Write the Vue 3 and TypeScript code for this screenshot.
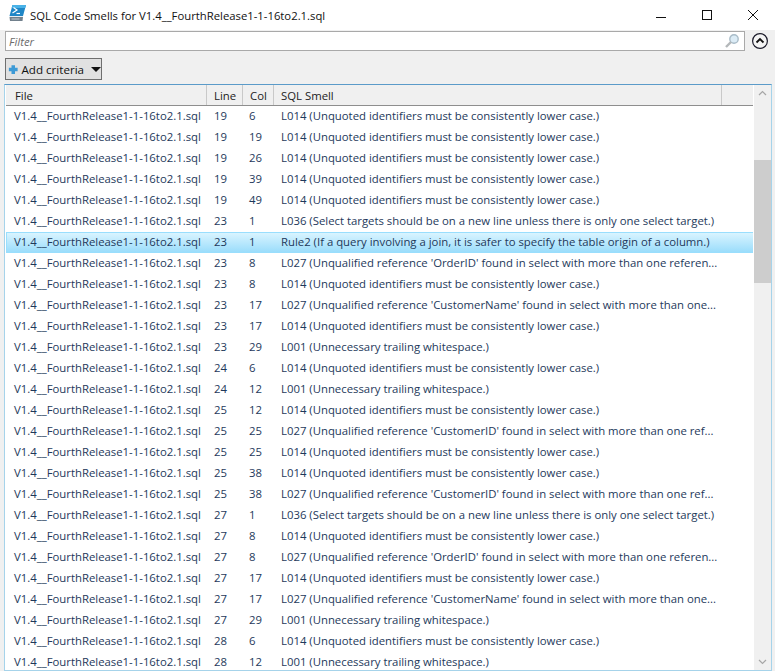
<template>
  <div class="window">
    <div class="titlebar">
      <svg class="app-icon" width="18" height="18" viewBox="0 0 18 18">
        <path d="M3.5 0H17l-3 11H0.5z" fill="#1f86c6" />
        <path d="M3.5 0H17l-.8 3H2.7z" fill="#49b2e8" />
        <path d="M4.5 2.5l3.5 2.5-4.5 3" fill="none" stroke="#fff" stroke-width="1.2" />
        <path d="M7.5 8.5h3.5" stroke="#fff" stroke-width="1.2" />
        <path d="M0.5 11H14v1H0.5z" fill="#e8eef2" />
        <path d="M0.5 12H14l-.5 4H1z" fill="#71808c" />
        <path d="M2.5 14h8" stroke="#c4ccd2" />
      </svg>
      <span class="title">SQL Code Smells for V1.4__FourthRelease1-1-16to2.1.sql</span>
      <div class="win-buttons">
        <svg width="12" height="12" viewBox="0 0 12 12"><path d="M1 8.5h10" stroke="#111" /></svg>
        <svg width="12" height="12" viewBox="0 0 12 12"><rect x="1.5" y="1.5" width="9" height="9" fill="none" stroke="#111" /></svg>
        <svg width="12" height="12" viewBox="0 0 12 12"><path d="M1 1l10 10M11 1L1 11" stroke="#111" /></svg>
      </div>
    </div>

    <div class="filter-bar">
      <div class="filter-box">
        <span class="filter-hint">Filter</span>
        <svg width="16" height="16" viewBox="0 0 16 16">
          <circle cx="10" cy="6" r="4.2" fill="#dcecf6" stroke="#a9bcc8" stroke-width="1.4" />
          <path d="M7 9l-5 5" stroke="#b4b8ba" stroke-width="2.4" />
        </svg>
      </div>
      <svg class="collapse" width="18" height="18" viewBox="0 0 18 18">
        <circle cx="9" cy="9" r="7.4" fill="#f4f4f4" stroke="#1b1b2a" stroke-width="1.2" />
        <path d="M5.5 10.5L9 7l3.5 3.5" fill="none" stroke="#111" stroke-width="1.8" />
      </svg>
    </div>

    <div class="toolbar">
      <button class="add-btn">
        <svg width="11" height="11" viewBox="0 0 12 12">
          <path d="M4 1h4v3h3v4H8v3H4V8H1V4h3z" fill="#3d9ad6" />
        </svg>
        <span class="add-label">Add criteria</span>
        <i class="caret"></i>
      </button>
    </div>

    <div class="list">
      <div class="list-main">
        <div class="row head">
          <div class="cell c-file">File</div>
          <div class="cell c-line">Line</div>
          <div class="cell c-col">Col</div>
          <div class="cell c-smell">SQL Smell</div>
          <div class="cell c-rest"></div>
        </div>
        <div
          v-for="(r, idx) in rows"
          :key="idx"
          class="row item"
          :class="{ selected: r.smell.startsWith('Rule2') }"
        >
          <div class="cell c-file">{{ fileName }}</div>
          <div class="cell c-line">{{ r.line }}</div>
          <div class="cell c-col">{{ r.col }}</div>
          <div class="cell c-smell">{{ r.smell }}</div>
        </div>
      </div>
      <div class="scrollbar">
        <svg class="arrow" width="17" height="17" viewBox="0 0 17 17"><path d="M5 10l3.5-3.5L12 10" fill="none" stroke="#a6a6a6" stroke-width="1.2" /></svg>
        <div class="thumb"></div>
        <div class="track-fill"></div>
        <svg class="arrow" width="17" height="17" viewBox="0 0 17 17"><path d="M5 7l3.5 3.5L12 7" fill="none" stroke="#a6a6a6" stroke-width="1.2" /></svg>
      </div>
    </div>
  </div>
</template>

<script setup lang="ts">
type Row = { line: number; col: number; smell: string }

const fileName = 'V1.4__FourthRelease1-1-16to2.1.sql'

const L014 = 'L014 (Unquoted identifiers must be consistently lower case.)'
const L001 = 'L001 (Unnecessary trailing whitespace.)'
const L036 = 'L036 (Select targets should be on a new line unless there is only one select target.)'
const RULE2 = 'Rule2 (If a query involving a join, it is safer to specify the table origin of a column.)'
const ORDER = "L027 (Unqualified reference 'OrderID' found in select with more than one referen..."
const CUSTOMER = "L027 (Unqualified reference 'CustomerName' found in select with more than one..."
const CUST_ID = "L027 (Unqualified reference 'CustomerID' found in select with more than one ref..."

const rows: Row[] = [
  { line: 19, col: 6, smell: L014 },
  { line: 19, col: 19, smell: L014 },
  { line: 19, col: 26, smell: L014 },
  { line: 19, col: 39, smell: L014 },
  { line: 19, col: 49, smell: L014 },
  { line: 23, col: 1, smell: L036 },
  { line: 23, col: 1, smell: RULE2 },
  { line: 23, col: 8, smell: ORDER },
  { line: 23, col: 8, smell: L014 },
  { line: 23, col: 17, smell: CUSTOMER },
  { line: 23, col: 17, smell: L014 },
  { line: 23, col: 29, smell: L001 },
  { line: 24, col: 6, smell: L014 },
  { line: 24, col: 12, smell: L001 },
  { line: 25, col: 12, smell: L014 },
  { line: 25, col: 25, smell: CUST_ID },
  { line: 25, col: 25, smell: L014 },
  { line: 25, col: 38, smell: L014 },
  { line: 25, col: 38, smell: CUST_ID },
  { line: 27, col: 1, smell: L036 },
  { line: 27, col: 8, smell: L014 },
  { line: 27, col: 8, smell: ORDER },
  { line: 27, col: 17, smell: L014 },
  { line: 27, col: 17, smell: CUSTOMER },
  { line: 27, col: 29, smell: L001 },
  { line: 28, col: 6, smell: L014 },
  { line: 28, col: 12, smell: L001 }
]
</script>

<style>
html, body { margin: 0; background: #f0f0f0; }
</style>

<style scoped>
.window {
  width: 775px;
  height: 671px;
  overflow: hidden;
  background: #f0f0f0;
  font-family: "Open Sans", "Noto Sans", sans-serif;
  font-size: 11.35px;
  color: #1e395b;
  display: flex;
  flex-direction: column;
}

.titlebar {
  height: 30px;
  flex: none;
  background: #fff;
  display: flex;
  align-items: center;
  padding-left: 9px;
  gap: 3px;
}
.app-icon { margin-top: -2px; }
.title { font-size: 11.3px; color: #111; }
.win-buttons {
  margin-left: auto;
  display: flex;
  gap: 34px;
  padding-right: 16px;
}

.filter-bar {
  height: 20px;
  flex: none;
  margin-top: 1px;
  padding: 0 6px 0 5px;
  display: flex;
  align-items: center;
  gap: 6px;
}
.filter-box {
  flex: 1;
  height: 18px;
  background: #fff;
  border: 1px solid #a9a9a9;
  display: flex;
  align-items: center;
  justify-content: space-between;
  padding: 0 4px 0 3px;
}
.filter-hint { font-style: italic; color: #6d6d6d; }

.toolbar {
  height: 33px;
  flex: none;
  padding: 7px 0 0 5px;
  box-sizing: border-box;
}
.add-btn {
  width: 97px;
  height: 22px;
  padding: 0 0 0 2px;
  box-sizing: border-box;
  background: #e1e1e1;
  border: 1px solid #6f6f6f;
  display: flex;
  align-items: center;
  gap: 3px;
  font: inherit;
  font-size: 11.6px;
  color: #111;
  white-space: nowrap;
}
.add-label { flex: none; }
.caret {
  margin-left: 4px;
  flex: none;
  width: 0;
  height: 0;
  border-left: 5px solid transparent;
  border-right: 5px solid transparent;
  border-top: 5px solid #111;
}

.list {
  flex: 1;
  min-height: 0;
  margin: 0 3px 0 4px;
  border: 1px solid #a6d3ea;
  border-top-color: #5b9bc9;
  background: #fff;
  display: flex;
}
.list-main {
  flex: 1;
  min-width: 0;
  padding-left: 1px;
  overflow: hidden;
}

.row {
  display: grid;
  grid-template-columns: 201px 36px 31px 1fr;
  align-items: center;
  box-sizing: border-box;
  white-space: nowrap;
}
.head {
  grid-template-columns: 201px 36px 31px 448px 31px;
  height: 21px;
  width: 747px;
  background: #f0f0f0;
  border-bottom: 1px solid #8e8e8e;
  color: #222;
}
.head .cell {
  height: 20px;
  line-height: 22px;
  border-right: 1px solid #c9c9c9;
}
.head .c-rest { border-right: none; }
.head .c-file { padding-left: 9px; }
.head .c-line { padding-left: 7px; }
.head .c-col { padding-left: 7px; }
.head .c-smell { padding-left: 7px; }

.item {
  height: 21px;
  width: 748px;
}
.item .cell { padding-bottom: 2px; }
.item .c-file { padding-left: 8px; }
.item .c-line { padding-left: 7px; }
.item .c-col { padding-left: 6px; }
.item .c-smell { padding-left: 7px; }

.selected {
  grid-template-columns: 200px 36px 31px 1fr;
  border: 1px solid #99defd;
  background: linear-gradient(#d9f4ff, #9bddfb);
}
.selected .c-file { padding-left: 7px; }

.scrollbar {
  width: 17px;
  margin-left: 1px;
  background: #f0f0f0;
  display: flex;
  flex-direction: column;
}
.arrow { flex: none; }
.thumb {
  flex: none;
  margin-top: 58px;
  height: 123px;
  background: #cdcdcd;
}
.track-fill { flex: 1; }
</style>
